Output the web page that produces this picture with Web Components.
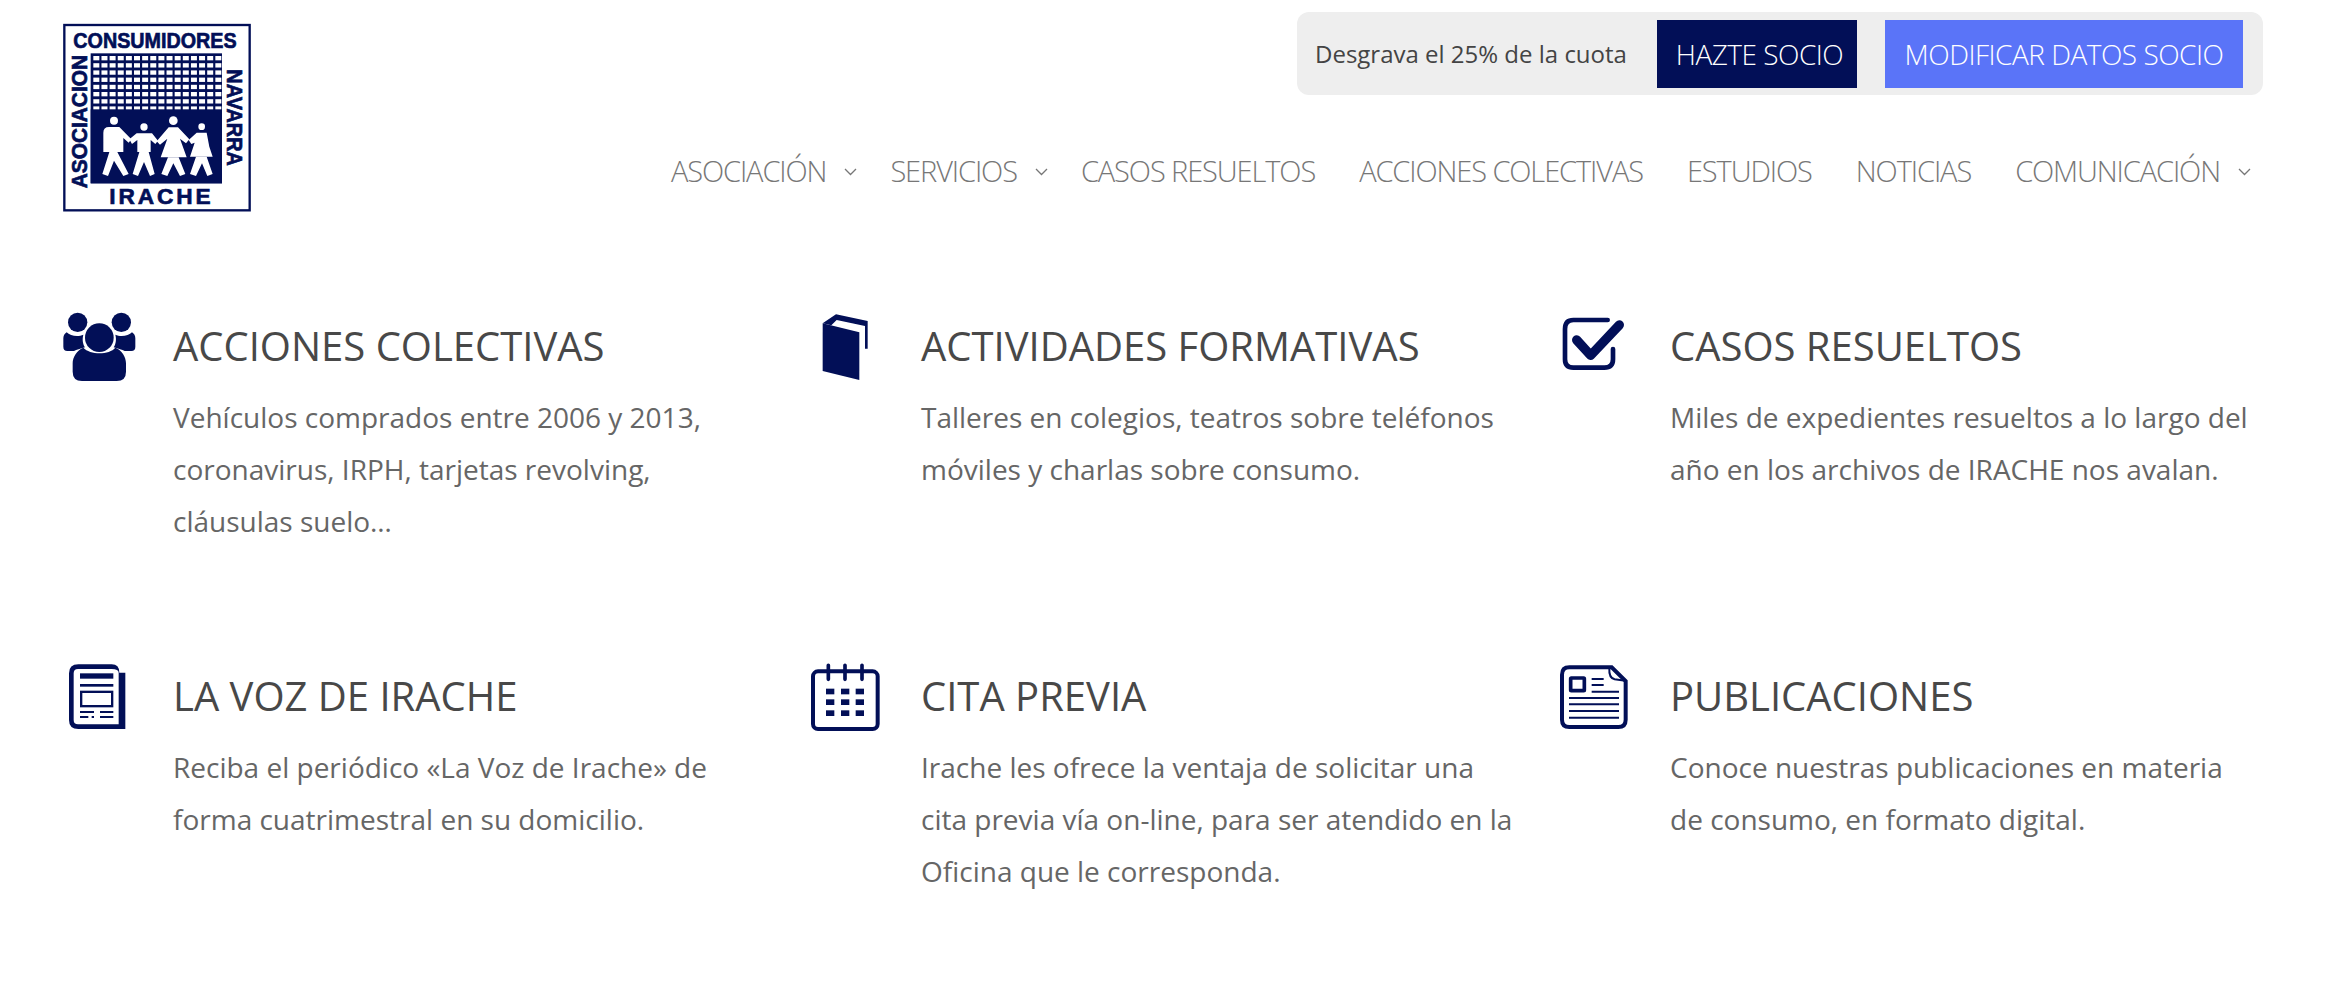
<!DOCTYPE html>
<html lang="es">
<head>
<meta charset="utf-8">
<title>Irache</title>
<style>
  html, body { margin: 0; background: #fff; }
  body { font-family: "Open Sans", "Liberation Sans", sans-serif; }
</style>
</head>
<body>
<site-page>
  <site-header slot="header">
    <top-bar>
      <span>Desgrava el 25% de la cuota</span>
      <bar-button slot="actions" tone="dark">HAZTE SOCIO</bar-button>
      <bar-button slot="actions" tone="light">MODIFICAR DATOS SOCIO</bar-button>
    </top-bar>
    <nav-menu slot="nav">
      <nav-item caret>ASOCIACIÓN</nav-item>
      <nav-item caret>SERVICIOS</nav-item>
      <nav-item>CASOS RESUELTOS</nav-item>
      <nav-item>ACCIONES COLECTIVAS</nav-item>
      <nav-item>ESTUDIOS</nav-item>
      <nav-item>NOTICIAS</nav-item>
      <nav-item caret>COMUNICACIÓN</nav-item>
    </nav-menu>
  </site-header>
  <feature-card icon="people" heading="ACCIONES COLECTIVAS">Vehículos comprados entre 2006 y 2013, coronavirus, IRPH, tarjetas revolving, cláusulas suelo…</feature-card>
  <feature-card icon="book" heading="ACTIVIDADES FORMATIVAS">Talleres en colegios, teatros sobre teléfonos móviles y charlas sobre consumo.</feature-card>
  <feature-card icon="check" heading="CASOS RESUELTOS">Miles de expedientes resueltos a lo largo del año en los archivos de IRACHE nos avalan.</feature-card>
  <feature-card icon="news" heading="LA VOZ DE IRACHE">Reciba el periódico «La Voz de Irache» de forma cuatrimestral en su domicilio.</feature-card>
  <feature-card icon="calendar" heading="CITA PREVIA">Irache les ofrece la ventaja de solicitar una cita previa vía on-line, para ser atendido en la Oficina que le corresponda.</feature-card>
  <feature-card icon="doc" heading="PUBLICACIONES">Conoce nuestras publicaciones en materia de consumo, en formato digital.</feature-card>
</site-page>

<script>
const NAVY = "#020f57";

// Pagina: cabecera arriba y rejilla de tres columnas debajo
class SitePage extends HTMLElement {
  connectedCallback() {
    this.attachShadow({ mode: "open" }).innerHTML = `
      <style>
        :host { display: block; width: 2344px; height: 1008px; overflow: hidden; }
        .grid {
          display: grid;
          grid-template-columns: 748px 749px 700px;
          grid-auto-rows: 350px;
          padding-left: 63px;
        }
      </style>
      <slot name="header"></slot>
      <div class="grid"><slot></slot></div>`;
  }
}

class SiteHeader extends HTMLElement {
  connectedCallback() {
    this.attachShadow({ mode: "open" }).innerHTML = `
      <style>
        :host {
          display: flex;
          justify-content: space-between;
          height: 300px;
          padding: 0 81px 0 62px;
          box-sizing: border-box;
        }
        .right { display: flex; flex-direction: column; align-items: flex-end; padding-top: 12px; }
        site-logo { margin-top: 23px; }
        ::slotted(nav-menu) { margin-top: 55px; }
      </style>
      <site-logo></site-logo>
      <div class="right">
        <slot></slot>
        <slot name="nav"></slot>
      </div>`;
  }
}

class SiteLogo extends HTMLElement {
  connectedCallback() {
    let cells = "";
    for (let r = 0; r < 8; r++) {
      for (let c = 0; c < 16; c++) {
        cells += `<rect x="${160 + c * 24.4}" y="${168 + r * 21.6}" width="18" height="13"/>`;
      }
    }
    this.attachShadow({ mode: "open" }).innerHTML = `
      <style>
        :host { display: block; width: 190px; height: 190px; }
        svg { display: block; }
        text { font-family: "Liberation Sans", sans-serif; font-weight: 700; fill: ${NAVY}; stroke: ${NAVY}; stroke-width: 2; }
      </style>
      <svg width="190" height="190" viewBox="66 69 570 570">
        <rect x="73" y="75" width="556" height="556" fill="#fff" stroke="${NAVY}" stroke-width="7"/>
        <rect x="152" y="160" width="394" height="390" fill="${NAVY}"/>
        <g fill="#fff">${cells}</g>
        <rect x="152" y="328" width="394" height="222" fill="${NAVY}"/>
        <text x="100" y="143" font-size="64" textLength="490" lengthAdjust="spacingAndGlyphs">CONSUMIDORES</text>
        <text transform="translate(140 565) rotate(-90)" font-size="64" textLength="400" lengthAdjust="spacingAndGlyphs">ASOCIACION</text>
        <text transform="translate(562 208) rotate(90)" font-size="66" textLength="290" lengthAdjust="spacingAndGlyphs">NAVARRA</text>
        <text x="208" y="612" font-size="68" textLength="304" lengthAdjust="spacing">IRACHE</text>
        <g fill="#fff">
          <circle cx="222" cy="362" r="12"/>
          <circle cx="312" cy="381" r="11"/>
          <circle cx="400" cy="362" r="13"/>
          <circle cx="485" cy="380" r="10"/>
          <path d="M190 398 Q190 381 207 381 H238 L274 418 L266 428 L250 414 V456 H190Z"/>
          <path d="M208 456 H232 L266 522 L250 528 L222 482 L204 528 L187 522Z"/>
          <path d="M268 418 L290 400 H336 L354 422 L346 432 L332 420 V456 H292 V420 L276 432Z"/>
          <path d="M298 456 H326 L344 522 L330 528 L312 486 L294 528 L278 522Z"/>
          <path d="M350 424 L386 382 H414 L448 418 L438 430 L420 416 L440 472 H362 L382 416 L360 434Z"/>
          <path d="M384 472 H416 L436 522 L420 528 L400 490 L382 528 L364 522Z"/>
          <path d="M446 420 L470 398 H500 L508 440 L518 470 H450 L464 428 L454 432Z"/>
          <path d="M468 470 H500 L518 522 L502 528 L486 490 L468 528 L450 522Z"/>
        </g>
      </svg>`;
  }
}

class TopBar extends HTMLElement {
  connectedCallback() {
    this.attachShadow({ mode: "open" }).innerHTML = `
      <style>
        :host {
          display: flex;
          align-items: center;
          width: 966px;
          height: 83px;
          box-sizing: border-box;
          padding: 0 20px 0 18px;
          background: #eeeeee;
          border-radius: 12px;
          font-size: 24px;
          color: #444;
        }
        .actions { display: flex; gap: 28px; margin-left: auto; }
      </style>
      <slot></slot>
      <div class="actions"><slot name="actions"></slot></div>`;
  }
}

class BarButton extends HTMLElement {
  connectedCallback() {
    const dark = this.getAttribute("tone") === "dark";
    this.attachShadow({ mode: "open" }).innerHTML = `
      <style>
        :host {
          display: flex;
          align-items: center;
          justify-content: center;
          width: ${dark ? 200 : 358}px;
          height: 68px;
          box-sizing: border-box;
          padding-left: ${dark ? 5 : 0}px;
          background: ${dark ? NAVY : "#5a74f8"};
          color: #fff;
          font-size: 28px;
          font-weight: 300;
          letter-spacing: -0.5px;
        }
      </style>
      <slot></slot>`;
  }
}

class NavMenu extends HTMLElement {
  connectedCallback() {
    this.attachShadow({ mode: "open" }).innerHTML = `
      <style>
        :host { display: flex; align-items: center; gap: 44px; height: 40px; padding-right: 12px; }
      </style>
      <slot></slot>`;
  }
}

class NavItem extends HTMLElement {
  connectedCallback() {
    const caret = this.hasAttribute("caret")
      ? `<svg width="13" height="8" viewBox="0 0 13 8"><path d="M1 1 L6.5 6.5 L12 1" fill="none" stroke="#777" stroke-width="1.3"/></svg>`
      : "";
    this.attachShadow({ mode: "open" }).innerHTML = `
      <style>
        :host {
          display: flex;
          align-items: center;
          gap: 18px;
          font-size: 29px;
          font-weight: 300;
          letter-spacing: -1.1px;
          color: #777;
          white-space: nowrap;
        }
        :host([caret]:not(:last-child)) { margin-right: -11px; }
        svg { margin-top: 3px; }
      </style>
      <slot></slot>${caret}`;
  }
}

// Iconos dibujados en coordenadas de 3x, cada uno con su viewBox
const ICONS = {
  people: `<svg viewBox="39 0 330 300"><g fill="${NAVY}">
      <circle cx="148" cy="113" r="43"/><circle cx="83" cy="67" r="29"/><circle cx="214" cy="67" r="29"/>
      <path d="M50 97 C60 108 85 112 100 104 C97 115 97 130 105 142 C90 146 80 150 72 153 L52 153 Q40 153 40 140 L40 115 Q40 103 50 97Z"/>
      <path d="M246 97 C236 108 211 112 196 104 C199 115 199 130 191 142 C206 146 216 150 224 153 L244 153 Q256 153 256 140 L256 115 Q256 103 246 97Z"/>
      <path d="M100 143 C120 165 178 165 196 143 C215 150 228 170 228 190 L228 215 Q228 243 200 243 L96 243 Q68 243 68 215 L68 190 C68 170 82 150 100 143Z"/>
    </g></svg>`,
  book: `<svg viewBox="33 0 330 300"><g fill="${NAVY}">
      <path d="M68 70 L178 97 V240 L68 213Z"/>
      <path d="M68 70 L108 43 L203 63 V146 H195 V78 L110 60 L94 76Z"/>
    </g></svg>`,
  check: `<svg viewBox="60 0 330 300">
      <path d="M203 60 H100 Q75 60 75 87 V178 Q75 203 100 203 H193 Q219 203 219 178 V147" fill="none" stroke="${NAVY}" stroke-width="14" stroke-linecap="round"/>
      <path d="M110 120 L152 166 L238 75" fill="none" stroke="${NAVY}" stroke-width="28" stroke-linecap="round" stroke-linejoin="round"/>
    </svg>`,
  news: `<svg viewBox="39 0 330 300"><g fill="${NAVY}">
      <path fill-rule="evenodd" d="M85 43 H185 Q208 43 208 68 H226 V237 H85 Q57 237 57 210 V70 Q57 43 85 43Z M84 57 Q71 57 71 70 V210 Q71 223 84 223 H206 V68 Q206 57 185 57Z"/>
      <rect x="90" y="70" width="100" height="16"/><rect x="90" y="102" width="100" height="8"/>
      <rect x="90" y="183" width="42" height="6"/><rect x="150" y="183" width="40" height="6"/>
      <rect x="90" y="198" width="25" height="6"/><rect x="125" y="198" width="7" height="6"/><rect x="150" y="198" width="40" height="6"/>
    </g><rect x="93.5" y="125.5" width="93" height="43" fill="none" stroke="${NAVY}" stroke-width="7"/></svg>`,
  calendar: `<svg viewBox="33 0 330 300">
      <rect x="39" y="64" width="194" height="173" rx="15" fill="none" stroke="${NAVY}" stroke-width="12"/>
      <path d="M85 46 V88 M135 46 V88 M186 46 V88" stroke="${NAVY}" stroke-width="11" stroke-linecap="round"/>
      <g fill="${NAVY}">
        <rect x="78" y="116" width="25" height="17"/><rect x="123" y="116" width="25" height="17"/><rect x="167" y="116" width="25" height="17"/>
        <rect x="78" y="148" width="25" height="17"/><rect x="123" y="148" width="25" height="17"/><rect x="167" y="148" width="25" height="17"/>
        <rect x="78" y="181" width="25" height="17"/><rect x="123" y="181" width="25" height="17"/><rect x="167" y="181" width="25" height="17"/>
      </g></svg>`,
  doc: `<svg viewBox="60 0 330 300"><g fill="none" stroke="${NAVY}">
      <path stroke-width="12" d="M215 52 H88 Q66 52 66 74 V209 Q66 231 88 231 H235 Q257 231 257 209 V93 Z"/>
      <path stroke-width="6" d="M208 54 Q206 84 224 88 L256 92"/>
      <rect stroke-width="11" x="92" y="84" width="41" height="38" rx="2"/>
      <path stroke-width="6" d="M155 87 H191 M155 105 H191 M155 125 H237 M87 144 H237 M87 163 H237 M87 183 H237 M87 203 H237"/>
    </g></svg>`
};

class FeatureCard extends HTMLElement {
  connectedCallback() {
    this.attachShadow({ mode: "open" }).innerHTML = `
      <style>
        :host { display: grid; grid-template-columns: 110px 592px; align-items: start; }
        .icon svg { display: block; width: 110px; height: 100px; }
        h3 {
          margin: 20px 0 19px;
          font-size: 40px;
          line-height: 52px;
          font-weight: 400;
          color: #484848;
        }
        .text { font-size: 28px; line-height: 52px; color: #666; }
      </style>
      <div class="icon">${ICONS[this.getAttribute("icon")]}</div>
      <div>
        <h3>${this.getAttribute("heading")}</h3>
        <div class="text"><slot></slot></div>
      </div>`;
  }
}

customElements.define("site-page", SitePage);
customElements.define("site-header", SiteHeader);
customElements.define("site-logo", SiteLogo);
customElements.define("top-bar", TopBar);
customElements.define("bar-button", BarButton);
customElements.define("nav-menu", NavMenu);
customElements.define("nav-item", NavItem);
customElements.define("feature-card", FeatureCard);
</script>
</body>
</html>
